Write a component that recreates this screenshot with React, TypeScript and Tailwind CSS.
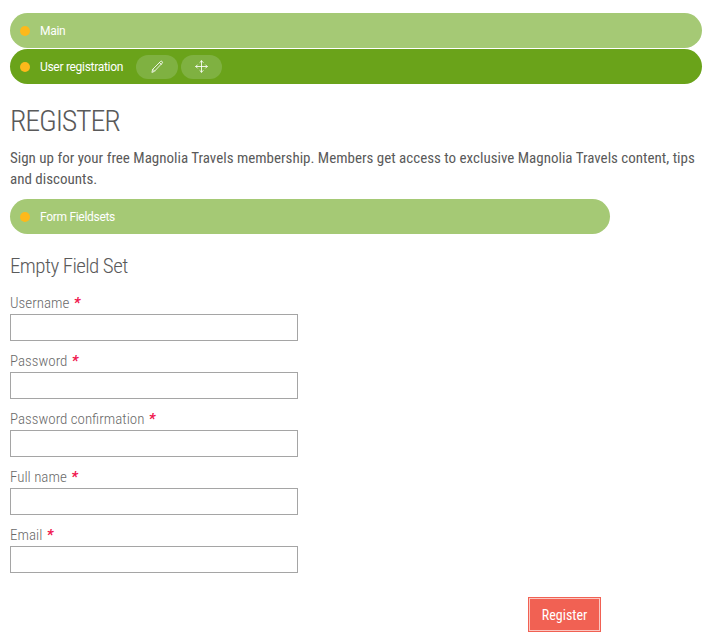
import type { ReactNode } from "react";

function Bar({ label, active, children, className }: { label: string; active?: boolean; children?: ReactNode; className?: string }) {
  return (
    <div className={`flex h-[35px] items-center rounded-full pl-[10px] font-['Roboto',sans-serif] text-[12px] tracking-[-0.3px] text-white ${active ? "bg-[#6aa31a]" : "bg-[#a5c975]"} ${className ?? ""}`}>
      <span className="mr-[10px] size-[10px] rounded-full bg-[#fdb91b]" />
      <span>{label}</span>
      {children}
    </div>
  );
}

function Action({ children, label, className }: { children: ReactNode; label: string; className: string }) {
  return (
    <button aria-label={label} className={`flex h-6 items-center justify-center rounded-full bg-[#7fb141] ${className}`}>
      <svg width="13" height="13" viewBox="0 0 13 13" fill="none" stroke="white" strokeWidth="0.85" strokeLinejoin="round" strokeLinecap="round">
        {children}
      </svg>
    </button>
  );
}

const fields = ["Username", "Password", "Password confirmation", "Full name", "Email"];

export default function App() {
  return (
    <main className="h-[643px] bg-white px-[10px] pt-[13px] pr-[11px] font-['Roboto_Condensed','Roboto',sans-serif] text-[#5a5a5a] antialiased">
      <Bar label="Main" />
      <Bar label="User registration" active className="mt-px">
        <Action label="Edit" className="ml-[13px] w-[42px]">
          <path d="M1 12l.7-2.7 7.9-7.9q.7-.6 1.5.1t.1 1.6L3.5 11.2zM8.5 2.6l1.8 1.7M1.9 9.4l1.6 1.6" />
        </Action>
        <Action label="Move" className="ml-[3px] w-[41px]">
          <path d="M6.5 .8v11.4M.8 6.5h11.4M4.9 2.4l1.6-1.6 1.6 1.6M4.9 10.6l1.6 1.6 1.6-1.6M2.4 4.9L.8 6.5l1.6 1.6M10.6 4.9l1.6 1.6-1.6 1.6" />
        </Action>
      </Bar>
      <h1 className="mt-[19px] text-[30px] leading-[36px] font-light tracking-[-1.2px]">REGISTER</h1>
      <p className="mt-[9px] text-[15px] leading-[21px]">
        Sign up for your free Magnolia Travels membership. Members get access to exclusive Magnolia Travels content, tips and discounts.
      </p>
      <Bar label="Form Fieldsets" className="mt-[9px] w-[600px]" />
      <form className="w-[600px]">
        <h2 className="mt-[19px] text-[21px] leading-[26px] font-light tracking-[-0.6px]">Empty Field Set</h2>
        <div className="mt-[14px] flex flex-col gap-[10px]">
          {fields.map((name) => (
            <label key={name} className="block text-[15px] leading-[21px] font-light text-[#6a6a6a]">
              <span className="block">
                {name} <em className="ml-px font-bold text-[#f0144d]">*</em>
              </span>
              <input className="block h-[27px] w-[288px] border border-[#a5a5a5] bg-white px-1" />
            </label>
          ))}
        </div>
        <div className="mt-6 mr-[9px] flex justify-end">
          <button type="button" className="h-[35px] w-[73px] bg-[#f16153] p-px text-[14px] text-white">
            <span className="flex h-full items-center justify-center border border-[#fbc8c2] pt-px">Register</span>
          </button>
        </div>
      </form>
    </main>
  );
}
